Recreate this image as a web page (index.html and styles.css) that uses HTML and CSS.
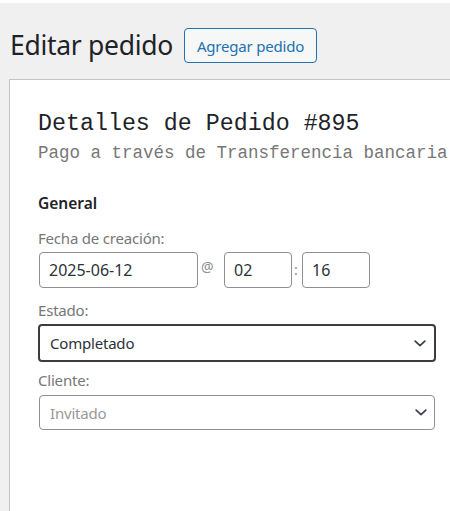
FILE: index.html
```html
<!DOCTYPE html>
<html lang="es">
<head>
<meta charset="utf-8">
<title>Editar pedido</title>
<link rel="stylesheet" href="styles.css">
</head>
<body>
<div class="topstrip"></div>
<div class="wrap">
  <div class="page-head">
    <h1 class="page-title">Editar pedido</h1>
    <a class="page-action" href="#">Agregar pedido</a>
  </div>
  <div class="panel">
    <h2 class="order-title">Detalles de Pedido #895</h2>
    <p class="order-meta">Pago a través de Transferencia bancaria</p>
    <h3 class="section-title">General</h3>
    <div class="field field-date">
      <label class="field-label">Fecha de creación:</label>
      <div class="date-row">
        <input class="text-input date-input" type="text" value="2025-06-12">
        <span class="sep sep-at">@</span>
        <input class="text-input time-input" type="text" value="02">
        <span class="sep sep-colon">:</span>
        <input class="text-input time-input" type="text" value="16">
      </div>
    </div>
    <div class="field field-status">
      <label class="field-label">Estado:</label>
      <div class="select-box select-focus">
        <span class="select-value">Completado</span>
        <svg class="chevron" width="12" height="7" viewBox="0 0 12 7"><path d="M1.2 1.2 L6 5.6 L10.8 1.2" fill="none" stroke="#3c434a" stroke-width="1.8" stroke-linecap="round" stroke-linejoin="round"/></svg>
      </div>
    </div>
    <div class="field field-customer">
      <label class="field-label">Cliente:</label>
      <div class="select-box">
        <span class="select-value placeholder">Invitado</span>
        <svg class="chevron" width="12" height="7" viewBox="0 0 12 7"><path d="M1.2 1.2 L6 5.6 L10.8 1.2" fill="none" stroke="#3c434a" stroke-width="1.8" stroke-linecap="round" stroke-linejoin="round"/></svg>
      </div>
    </div>
  </div>
</div>
</body>
</html>
```

FILE: styles.css
```css
html, body {
  margin: 0;
  padding: 0;
  height: 100%;
  overflow: hidden;
}
body {
  background: #f0f0f1;
  font-family: "Noto Sans", "Open Sans", sans-serif;
  color: #1d2327;
}
.topstrip {
  height: 3px;
  background: #ffffff;
}
.wrap {
  padding-left: 9px;
}
.page-head {
  display: flex;
  align-items: center;
  gap: 11px;
  padding-left: 1px;
  padding-top: 25px;
  height: 35px;
}
.page-title {
  margin: 0;
  font-size: 26.5px;
  font-weight: 400;
  line-height: 35px;
  color: #1d2327;
  letter-spacing: -0.3px;
}
.page-action {
  display: flex;
  align-items: center;
  height: 33px;
  padding: 0 12px;
  border: 1px solid #2271b1;
  border-radius: 4px;
  background: #f6f7f7;
  color: #2271b1;
  font-size: 15px;
  text-decoration: none;
  letter-spacing: -0.2px;
}
.panel {
  margin-top: 16px;
  border-left: 1px solid #c3c4c7;
  border-top: 1px solid #c3c4c7;
  background: #ffffff;
  height: 600px;
  padding: 0 13px 0 28px;
}
.order-title {
  margin: 0;
  padding-top: 30px;
  font-family: "Liberation Mono", "DejaVu Sans Mono", monospace;
  font-size: 23.3px;
  font-weight: 400;
  line-height: 28px;
  color: #1d2327;
  white-space: nowrap;
}
.order-meta {
  margin: 4px 0 0;
  font-family: "Liberation Mono", "DejaVu Sans Mono", monospace;
  font-size: 17.5px;
  line-height: 22px;
  color: #777777;
  white-space: nowrap;
}
.section-title {
  margin: 0;
  padding-top: 29px;
  font-size: 15.5px;
  font-weight: 600;
  line-height: 20px;
  color: #1d2327;
}
.field {
  display: flex;
  flex-direction: column;
  gap: 4px;
}
.field-date {
  margin-top: 15px;
}
.field-status {
  margin-top: 12px;
}
.field-customer {
  margin-top: 8px;
  gap: 5px;
}
.field-label {
  font-size: 15px;
  line-height: 20px;
  color: #777777;
  letter-spacing: -0.2px;
}
.date-row {
  display: flex;
  align-items: center;
  margin-left: 1px;
}
.text-input {
  box-sizing: border-box;
  height: 36px;
  margin: 0;
  padding: 0 9px;
  border: 1px solid #8c8f94;
  border-radius: 4px;
  background: #ffffff;
  font-family: "Noto Sans", "Open Sans", sans-serif;
  font-size: 16px;
  color: #2c3338;
  outline: none;
}
.date-input {
  width: 159px;
}
.time-input {
  width: 68px;
}
.sep {
  font-size: 14px;
  color: #8c8f94;
  line-height: 20px;
  margin-top: -6px;
}
.sep-at {
  width: 26px;
  padding-left: 3px;
  box-sizing: border-box;
}
.sep-colon {
  width: 10px;
  padding-left: 2px;
  box-sizing: border-box;
  margin-top: 0;
}
.select-box {
  box-sizing: border-box;
  display: flex;
  align-items: center;
  justify-content: space-between;
  width: 396px;
  height: 35px;
  padding: 0 7px 0 10px;
  border: 1px solid #8c8f94;
  border-radius: 4px;
  margin-left: 1px;
}
.select-focus {
  width: 398px;
  height: 38px;
  margin-left: 0;
  border: 2px solid #3c3c3c;
  padding: 0 8px 0 10px;
}
.select-value {
  font-size: 15px;
  color: #2c3338;
  letter-spacing: -0.2px;
}
.placeholder {
  color: #999999;
}
.chevron {
  display: block;
}
```
